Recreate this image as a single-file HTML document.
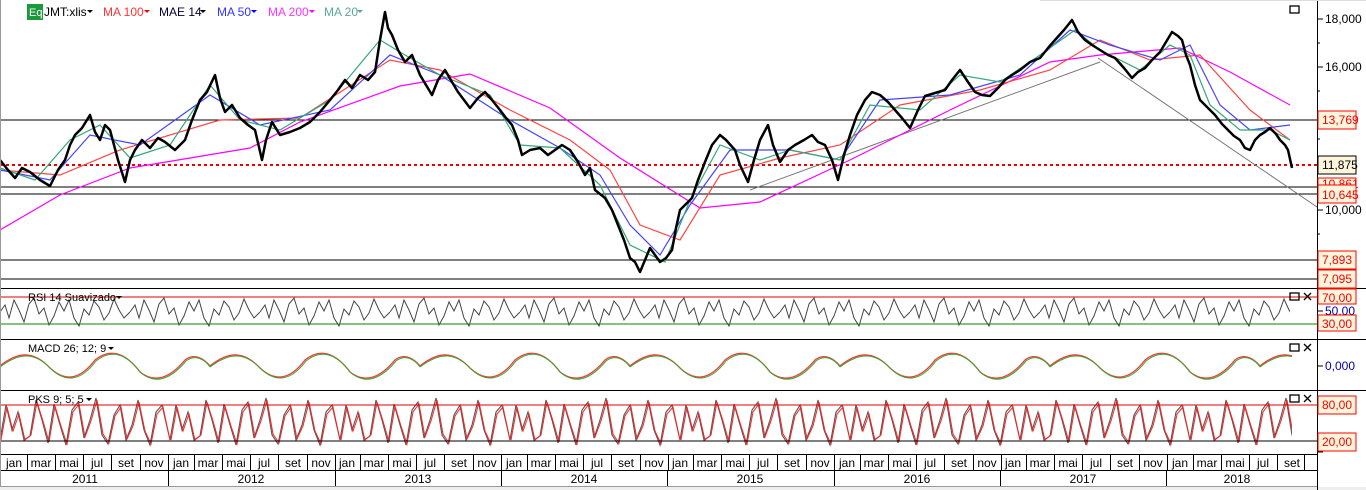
<!DOCTYPE html>
<html><head><meta charset="utf-8"><style>
html,body{margin:0;padding:0;background:#fff;width:1366px;height:490px;overflow:hidden;font-family:"Liberation Sans",sans-serif}
svg text{font-family:"Liberation Sans",sans-serif}
</style></head><body>
<svg width="1366" height="490" viewBox="0 0 1366 490" xmlns="http://www.w3.org/2000/svg">
<defs>
<pattern id="pks" x="0" y="0" width="170" height="490" patternUnits="userSpaceOnUse">
<path d="M0 440 L6 405 L12 430 L18 412 L24 440 L30 436 L36 400 L42 420 L48 443 L54 404 L60 425 L66 445 L72 410 L78 402 L84 438 L90 420 L96 398 L102 435 L108 444 L114 415 L120 405 L126 440 L132 425 L138 400 L144 430 L150 445 L156 412 L162 405 L170 440" fill="none" stroke="#555" stroke-width="1.1"/>
<path d="M1 440 L7 407 L13 431 L19 414 L25 440 L31 435 L37 402 L43 421 L49 442 L55 406 L61 426 L67 444 L73 412 L79 404 L85 437 L91 421 L97 400 L103 434 L109 443 L115 416 L121 407 L127 439 L133 426 L139 402 L145 431 L151 444 L157 414 L163 407 L170 440" fill="none" stroke="#f22" stroke-width="1"/>
</pattern>
<pattern id="rsi" x="0" y="0" width="130" height="490" patternUnits="userSpaceOnUse">
<path d="M0 312 L5 305 L9 318 L14 300 L19 310 L24 322 L29 304 L34 298 L39 314 L44 308 L49 325 L54 316 L59 302 L64 311 L69 300 L74 318 L79 326 L84 309 L89 315 L94 301 L99 307 L104 320 L109 313 L114 299 L119 310 L124 318 L130 312" fill="none" stroke="#444" stroke-width="1"/>
</pattern>
<pattern id="macd" x="0" y="0" width="210" height="490" patternUnits="userSpaceOnUse">
<path d="M0 366 C20 350 35 352 50 368 C65 382 80 380 95 360 C110 348 125 352 140 372 C155 384 170 378 185 360 C195 352 205 360 210 366" fill="none" stroke="#f33" stroke-width="1.3"/>
<path d="M0 367 C21 351 36 353 51 369 C66 383 81 381 96 361 C111 349 126 353 141 373 C156 385 171 379 186 361 C196 353 206 361 210 367" fill="none" stroke="#3a3" stroke-width="1"/>
</pattern>
</defs>
<rect x="0" y="289" width="1290" height="49" fill="url(#rsi)"/>
<rect x="0" y="340" width="1292" height="49" fill="url(#macd)"/>
<rect x="0" y="391" width="1292" height="63" fill="url(#pks)"/>
<line x1="0" y1="120" x2="1317" y2="120" stroke="#000"/>
<line x1="0" y1="165" x2="1317" y2="165" stroke="#e00" stroke-width="2" stroke-dasharray="3,3"/>
<line x1="0" y1="187" x2="1317" y2="187" stroke="#000"/>
<line x1="0" y1="194" x2="1317" y2="194" stroke="#000"/>
<line x1="0" y1="260" x2="1317" y2="260" stroke="#000"/>
<line x1="0" y1="279" x2="1317" y2="279" stroke="#000"/>
<line x1="750" y1="190" x2="1100" y2="62" stroke="#777"/>
<line x1="1098" y1="58" x2="1317" y2="207" stroke="#777"/>
<polyline fill="none" stroke="#f0f" stroke-width="1.2" points="0,230 60,195 130,168 250,148 300,122 400,86 470,74 550,108 620,158 700,208 760,202 850,160 950,110 1050,62 1100,55 1180,48 1230,72 1290,105"/>
<polyline fill="none" stroke="#f44" stroke-width="1.2" points="0,170 60,175 120,150 220,120 300,118 390,60 440,70 510,110 570,140 610,170 640,225 680,240 720,175 780,158 840,145 900,105 980,90 1050,70 1100,40 1150,60 1200,55 1250,110 1290,140"/>
<polyline fill="none" stroke="#44f" stroke-width="1.2" points="0,170 50,180 90,135 140,145 210,95 260,125 330,110 390,55 440,75 510,120 560,148 600,175 630,225 660,255 690,205 730,150 790,150 840,160 880,100 950,95 1020,75 1070,30 1110,45 1160,60 1190,45 1220,105 1250,130 1290,125"/>
<polyline fill="none" stroke="#3a7" stroke-width="1.2" points="0,168 35,180 70,140 100,125 130,158 170,145 210,85 240,120 280,130 330,100 380,40 405,55 440,75 490,95 520,145 560,148 600,185 630,245 665,262 690,200 720,145 760,160 790,150 840,160 870,105 920,110 960,75 1000,82 1040,55 1075,30 1100,50 1140,70 1170,45 1190,55 1210,105 1240,130 1270,130 1290,140"/>
<polyline fill="none" stroke="#000" stroke-width="2.5" stroke-linejoin="round" points="0,160 8,170 15,178 22,168 30,172 40,180 50,186 58,170 65,160 70,145 75,135 82,128 90,115 95,132 100,140 105,125 110,130 118,160 125,182 130,160 135,150 142,140 150,148 158,138 165,142 175,150 185,140 192,120 200,100 207,92 215,75 220,98 225,112 232,105 240,118 248,125 255,130 262,160 266,140 272,122 280,135 290,132 300,128 310,122 320,112 330,100 338,90 345,80 352,88 360,75 368,80 375,72 380,40 385,12 388,28 392,35 398,50 405,62 412,55 420,75 426,85 432,95 438,80 445,70 452,82 458,92 464,100 470,108 478,98 485,92 492,100 500,110 506,118 512,125 518,140 522,155 530,150 540,148 548,155 555,150 562,145 570,150 578,162 585,175 590,168 595,190 600,194 605,198 612,210 618,225 624,240 630,258 635,262 640,272 645,260 650,248 655,255 660,262 666,258 672,250 676,228 680,210 686,204 692,198 698,180 705,162 712,145 720,135 726,140 735,150 740,165 748,182 754,160 760,140 768,125 773,145 780,162 788,150 795,145 804,140 812,135 818,142 825,145 832,160 838,180 844,155 850,135 857,115 865,100 872,92 880,95 888,102 895,110 902,118 910,128 918,110 925,96 935,93 945,90 952,80 960,70 968,82 975,92 982,95 990,96 998,88 1005,80 1012,75 1020,70 1030,62 1040,58 1048,48 1055,40 1064,30 1072,20 1078,32 1085,40 1092,45 1100,50 1108,55 1115,58 1124,68 1132,78 1138,72 1145,68 1152,60 1160,52 1166,42 1172,32 1178,36 1182,40 1186,55 1190,65 1195,85 1200,100 1208,108 1215,115 1222,124 1228,130 1234,136 1240,140 1245,148 1250,150 1255,140 1260,135 1265,132 1270,128 1276,134 1280,140 1285,145 1288,150 1292,168"/>
<line x1="0" y1="297" x2="1317" y2="297" stroke="#d00"/>
<line x1="0" y1="324" x2="1317" y2="324" stroke="#080"/>
<line x1="0" y1="405" x2="1317" y2="405" stroke="#d00"/>
<line x1="0" y1="441" x2="1317" y2="441" stroke="#000"/>
<line x1="0" y1="288.5" x2="1366" y2="288.5" stroke="#000"/>
<line x1="0" y1="339.5" x2="1366" y2="339.5" stroke="#000"/>
<line x1="0" y1="390.5" x2="1366" y2="390.5" stroke="#000"/>
<line x1="0" y1="454.5" x2="1317" y2="454.5" stroke="#000"/>
<line x1="0" y1="470.5" x2="1317" y2="470.5" stroke="#000"/>
<g stroke="#000">
<line x1="168.5" y1="470" x2="168.5" y2="486"/><line x1="335.5" y1="470" x2="335.5" y2="486"/><line x1="501.5" y1="470" x2="501.5" y2="486"/><line x1="667.5" y1="470" x2="667.5" y2="486"/><line x1="834.5" y1="470" x2="834.5" y2="486"/><line x1="1000.5" y1="470" x2="1000.5" y2="486"/><line x1="1166.5" y1="470" x2="1166.5" y2="486"/>
</g>
<g font-size="12" text-anchor="middle">
<text x="85" y="483">2011</text><text x="251" y="483">2012</text><text x="418" y="483">2013</text><text x="584" y="483">2014</text><text x="750" y="483">2015</text><text x="917" y="483">2016</text><text x="1083" y="483">2017</text><text x="1237" y="483">2018</text>
</g>
<g font-size="12" text-anchor="middle">
<g id="yr">
<text x="14" y="467">jan</text><text x="41" y="467">mar</text><text x="69" y="467">mai</text><text x="97" y="467">jul</text><text x="126" y="467">set</text><text x="154" y="467">nov</text>
<path d="M27.5 455v15M55.5 455v15M83.5 455v15M111.5 455v15M140.5 455v15M168.5 455v15" stroke="#000"/>
</g>
<use href="#yr" x="167"/><use href="#yr" x="333"/><use href="#yr" x="500"/><use href="#yr" x="666"/><use href="#yr" x="833"/><use href="#yr" x="999"/><use href="#yr" x="1166"/>
</g>
<rect x="1305" y="455" width="61" height="32" fill="#fff"/>
<line x1="1304.5" y1="455" x2="1304.5" y2="470" stroke="#000"/>
<line x1="1304" y1="470.5" x2="1317" y2="470.5" stroke="#000"/>
<line x1="0" y1="486.5" x2="1317" y2="486.5" stroke="#999"/>
<rect x="0" y="487" width="1366" height="3" fill="#eee"/>
<line x1="0.5" y1="0" x2="0.5" y2="487" stroke="#999"/>
<line x1="1317.5" y1="0" x2="1317.5" y2="490" stroke="#000"/>
<line x1="1040" y1="0.5" x2="1366" y2="0.5" stroke="#ddd"/>
<g stroke="#000">
<line x1="1317" y1="19" x2="1323" y2="19"/><line x1="1317" y1="67" x2="1323" y2="67"/><line x1="1317" y1="210" x2="1323" y2="210"/>
<line x1="1317" y1="43" x2="1320" y2="43"/><line x1="1317" y1="91" x2="1320" y2="91"/><line x1="1317" y1="139" x2="1320" y2="139"/><line x1="1317" y1="234" x2="1320" y2="234"/>
<line x1="1317" y1="311" x2="1323" y2="311"/><line x1="1317" y1="366" x2="1323" y2="366"/>
<line x1="1317" y1="452" x2="1323" y2="452"/>
</g>
<g font-size="12">
<text x="1325" y="23" fill="#000">18,000</text>
<text x="1325" y="71" fill="#000">16,000</text>
<text x="1325" y="214" fill="#000">10,000</text>
<text x="1325" y="315" fill="#00a">50,00</text>
<text x="1325" y="370" fill="#00a">0,000</text>
</g>
<g font-size="12" fill="#f00">
<rect x="1318" y="111" width="38" height="18" fill="#fdf6dc" stroke="#f00"/><text x="1322" y="124">13,769</text>
<rect x="1318" y="156" width="38" height="18" fill="#fdf6dc" stroke="#000"/><text x="1322" y="169" fill="#000">11,875</text>
<rect x="1318" y="178" width="38" height="9" fill="#fdf6dc" stroke="#f00"/><text x="1322" y="188">10,861</text>
<rect x="1318" y="185" width="38" height="18" fill="#fdf6dc" stroke="#f00"/><text x="1322" y="199">10,645</text>
<rect x="1318" y="251" width="38" height="18" fill="#fdf6dc" stroke="#f00"/><text x="1322" y="264">7,893</text>
<rect x="1318" y="270" width="38" height="18" fill="#fdf6dc" stroke="#f00"/><text x="1322" y="283">7,095</text>
<rect x="1318" y="289" width="38" height="15" fill="#fdf6dc" stroke="#f00"/><text x="1322" y="302">70,00</text>
<rect x="1318" y="315" width="38" height="16" fill="#fdf6dc" stroke="#f00"/><text x="1322" y="328">30,00</text>
<rect x="1318" y="396" width="38" height="18" fill="#fdf6dc" stroke="#f00"/><text x="1322" y="409">80,00</text>
<rect x="1318" y="433" width="38" height="18" fill="#fdf6dc" stroke="#f00"/><text x="1322" y="446">20,00</text>
</g>
<g fill="none" stroke="#000" stroke-width="1.3">
<rect x="1290" y="6" width="9" height="7"/>
<rect x="1290" y="293" width="9" height="7"/><path d="M1304 293 l7 7 M1311 293 l-7 7"/>
<rect x="1290" y="344" width="9" height="7"/><path d="M1304 344 l7 7 M1311 344 l-7 7"/>
<rect x="1290" y="395" width="9" height="7"/><path d="M1304 395 l7 7 M1311 395 l-7 7"/>
</g>
<rect x="27" y="4" width="16" height="16" fill="#1a9a3a"/>
<text x="29" y="16" font-size="11" fill="#fff">Eq</text>
<g font-size="12">
<text x="44" y="16" fill="#000">JMT:xlis</text><path d="M87 10 l6 0 l-3 3z" fill="#000"/>
<text x="103" y="16" fill="#f33">MA 100</text><path d="M144 10 l6 0 l-3 3z" fill="#f00"/>
<text x="159" y="16" fill="#003">MAE 14</text><path d="M200 10 l6 0 l-3 3z" fill="#000"/>
<text x="217" y="16" fill="#33f">MA 50</text><path d="M251 10 l6 0 l-3 3z" fill="#00f"/>
<text x="268" y="16" fill="#f3f">MA 200</text><path d="M309 10 l6 0 l-3 3z" fill="#f0f"/>
<text x="324" y="16" fill="#5a9">MA 20</text><path d="M357 10 l6 0 l-3 3z" fill="#5a9"/>
<text x="28" y="301" fill="#000" font-size="11">RSI 14 Suavizado</text><path d="M116 296 l6 0 l-3 3z" fill="#000"/>
<text x="28" y="352" fill="#000" font-size="11">MACD 26; 12; 9</text><path d="M108 347 l6 0 l-3 3z" fill="#000"/>
<text x="28" y="403" fill="#000" font-size="11">PKS 9; 5; 5</text><path d="M86 398 l6 0 l-3 3z" fill="#000"/>
</g>
</svg>
</body></html>
